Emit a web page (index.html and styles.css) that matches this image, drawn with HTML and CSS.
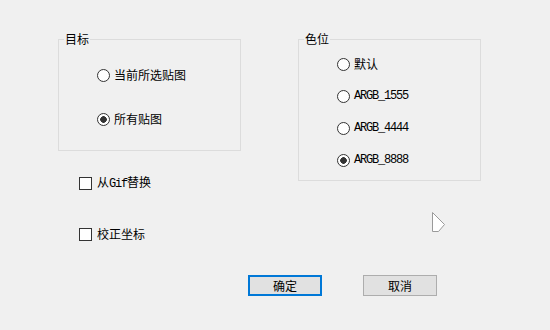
FILE: index.html
```html
<!DOCTYPE html>
<html lang="zh-CN">
<head>
  <meta charset="UTF-8" />
  <title>替换设置</title>
  <link rel="stylesheet" href="styles.css">
</head>
<body>
  <div class="dialog">
    <div class="top">
      <div class="col-left">
        <fieldset class="group group-target">
          <legend>目标</legend>
          <div class="options">
            <label class="opt"><input type="radio" name="target"><span>当前所选贴图</span></label>
            <label class="opt"><input type="radio" name="target" checked><span>所有贴图</span></label>
          </div>
        </fieldset>

        <div class="checks">
          <label class="opt"><input type="checkbox"><span>从<span class="latin">Gif</span>替换</span></label>
          <label class="opt"><input type="checkbox"><span>校正坐标</span></label>
        </div>
      </div>

      <div class="col-right">
        <fieldset class="group group-format">
          <legend>色位</legend>
          <div class="options">
            <label class="opt"><input type="radio" name="format"><span>默认</span></label>
            <label class="opt"><input type="radio" name="format"><span class="latin">ARGB_1555</span></label>
            <label class="opt"><input type="radio" name="format"><span class="latin">ARGB_4444</span></label>
            <label class="opt"><input type="radio" name="format" checked><span class="latin">ARGB_8888</span></label>
          </div>
        </fieldset>
      </div>
    </div>

    <div class="buttons">
      <button class="btn default">确定</button>
      <button class="btn">取消</button>
    </div>
  </div>

  <!-- mouse pointer left in the shot -->
  <svg class="cursor" width="18" height="24" viewBox="0 0 18 24">
    <polygon points="2.5,2.5 2.5,21.5 8.5,21.5 14.5,14.5" fill="#fff" stroke="#9a9a9a" stroke-width="1" />
  </svg>
</body>
</html>
```

FILE: styles.css
```css
:root {
  --bg: #f0f0f0;
  --group-border: #dcdcdc;
  --mark-border: #333;
  --btn-bg: #e1e1e1;
  --btn-border: #adadad;
  --accent: #0078d7;
}

body {
  margin: 0;
  background: var(--bg);
  color: #000;
  font-family: "Noto Sans CJK SC", "Microsoft YaHei", sans-serif;
  font-size: 12px;
  line-height: 14px;
  width: 550px;
  height: 330px;
  overflow: hidden;
  position: relative;
}

.dialog {
  display: flex;
  flex-direction: column;
  padding: 32px 0 0 58px;
}

.top {
  display: flex;
  gap: 57px;
  height: 209px;
}

.col-left {
  width: 183px;
}

.col-right {
  width: 183px;
}

/* group boxes */
.group {
  margin: 0;
  padding: 0;
  border: 1px solid var(--group-border);
  box-sizing: border-box;
}
.group legend {
  padding: 0 1px;
  margin-left: 5px;
  line-height: 14px;
}

.options {
  display: flex;
  flex-direction: column;
  align-items: flex-start;
  padding-left: 38px;
}

.group-target {
  height: 119px;
}
.group-target .options {
  padding-top: 22px;
  gap: 30px;
}

.group-format {
  height: 149px;
}
.group-format .options {
  padding-top: 11px;
  gap: 18px;
}

.opt {
  display: flex;
  align-items: center;
  height: 14px;
  gap: 4px;
  white-space: nowrap;
}

.latin {
  font-family: "Liberation Mono", monospace;
  letter-spacing: -1.2px;
}

/* radio and check marks */
.opt input {
  appearance: none;
  margin: 0;
  width: 13px;
  height: 13px;
  border: 1px solid var(--mark-border);
  background: #fff;
  box-sizing: border-box;
  flex: none;
}
.opt input[type="radio"] {
  border-radius: 50%;
}
.opt input[type="radio"]:checked {
  background: radial-gradient(circle, #333 0 3px, #fff 3.6px);
}

.checks {
  display: flex;
  flex-direction: column;
  gap: 37px;
  margin: 25px 0 0 21px;
}
.checks .opt {
  gap: 5px;
}

/* buttons */
.buttons {
  display: flex;
  gap: 41px;
  margin: 34px 0 0 190px;
}

.btn {
  width: 74px;
  height: 21px;
  padding: 0;
  background: var(--btn-bg);
  border: 1px solid var(--btn-border);
  font-family: inherit;
  font-size: 12px;
  color: #000;
}
.btn.default {
  border: 2px solid var(--accent);
}

.cursor {
  position: absolute;
  left: 430px;
  top: 210px;
}
```
